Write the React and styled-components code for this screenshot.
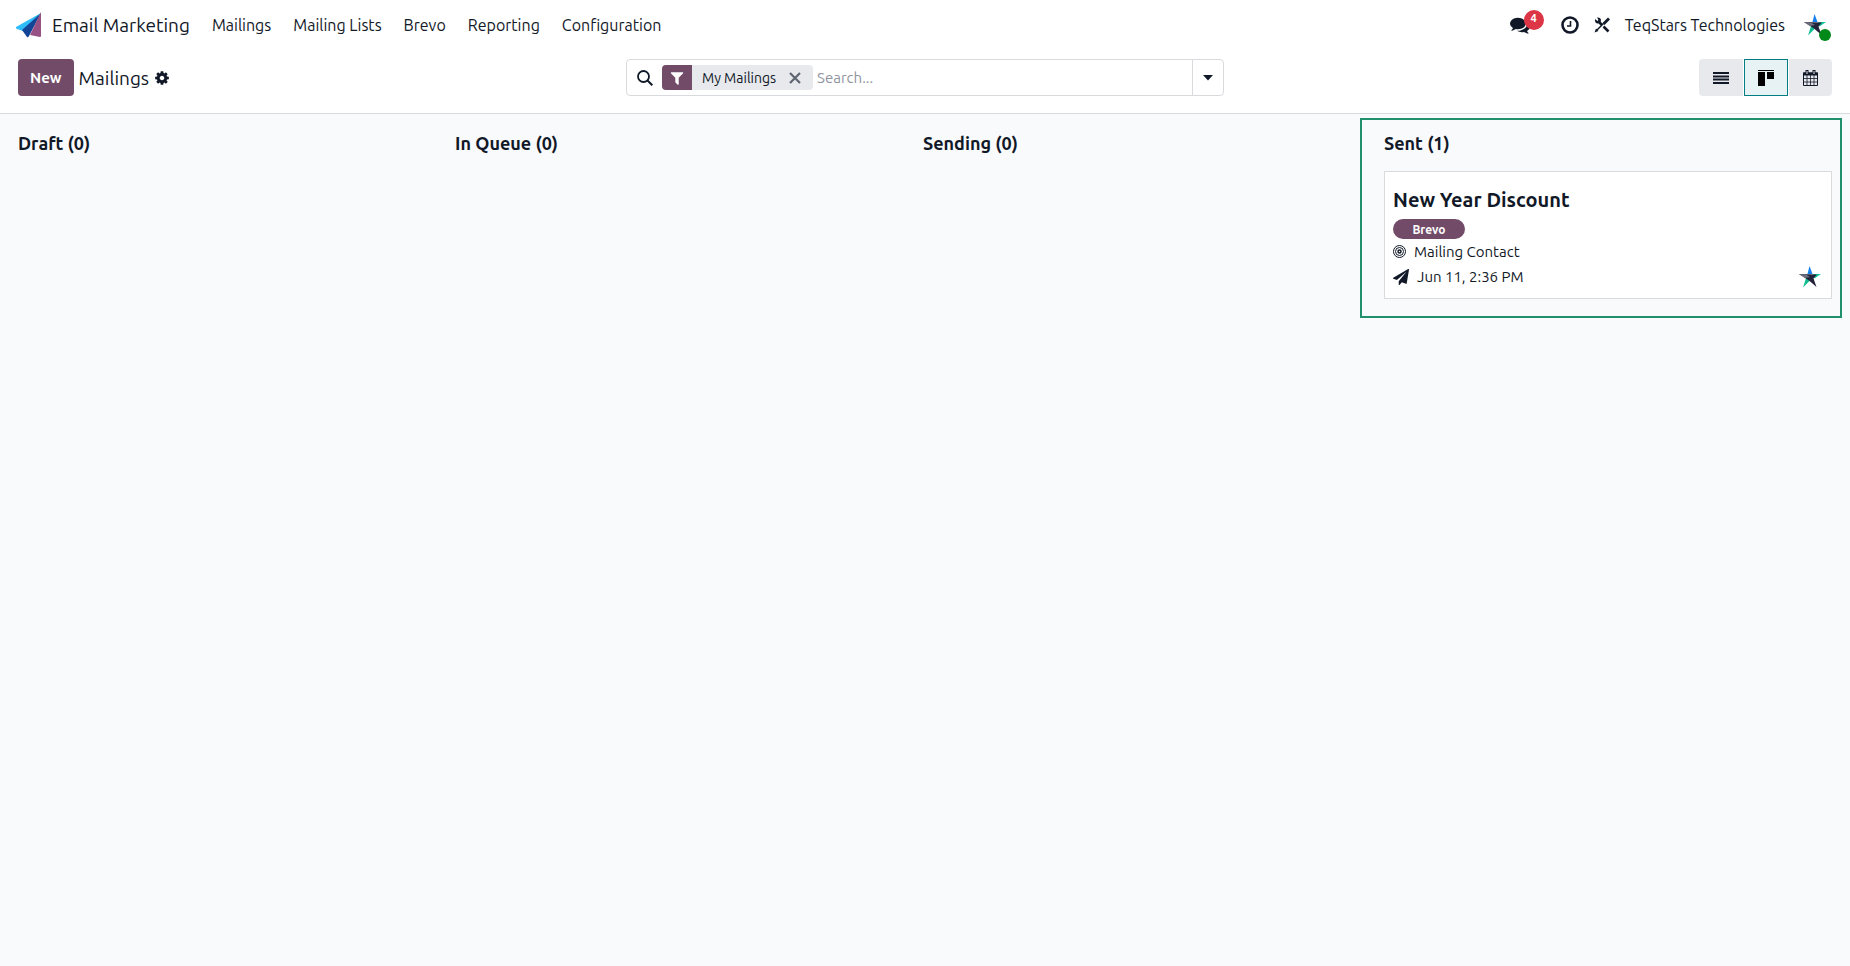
import styled, { createGlobalStyle, css } from 'styled-components';

/// /////////////////////////////////////////////
// styled
/// /////////////////////////////////////////////

const color = {
  text: '#111827',
  muted: '#8f949e',
  line: '#d8dadd',
  brand: '#714b67',
  gray: '#e7e9ed',
  teal: '#017e84',
  green: '#20916c',
};

const GlobalStyle = createGlobalStyle`
  * {
    box-sizing: border-box;
  }
  body {
    margin: 0;
    background: #f9fafc;
    color: ${color.text};
    font-family: Ubuntu, 'Noto Sans', sans-serif;
    font-size: 15px;
    line-height: 24px;
  }
  button,
  input {
    margin: 0;
    padding: 0;
    border: 0;
    background: none;
    color: inherit;
    font: inherit;
  }
  button {
    cursor: pointer;
  }
  svg {
    display: block;
    flex: none;
  }
`;

const Top = styled.header`
  background: #fff;
  border-bottom: 1px solid ${color.line};
`;

const Navbar = styled.nav`
  display: flex;
  align-items: center;
  height: 50px;
  padding: 0 24px 0 16px;
  font-size: 16px;
`;

const AppLink = styled.a`
  display: flex;
  align-items: center;
  gap: 10px;
  margin-right: 22px;
  color: inherit;
  font-size: 19px;
  text-decoration: none;
`;

const Menu = styled.div`
  display: flex;
  gap: 22px;
`;

const MenuLink = styled.a`
  color: inherit;
  text-decoration: none;
`;

const Systray = styled.div`
  display: flex;
  align-items: center;
  gap: 15px;
  margin-left: auto;
`;

const IconButton = styled.button`
  display: flex;
  position: relative;
  margin-right: ${props => (props.$counted ? '16px' : 0)};
`;

const Company = styled.span`
  margin-right: 4px;
`;

const Counter = styled.span`
  position: absolute;
  left: 14px;
  top: -5px;
  width: 20px;
  height: 20px;
  border-radius: 10px;
  background: #dc3545;
  color: #fff;
  font-size: 11px;
  font-weight: 600;
  line-height: 17px;
  text-align: center;
`;

const Online = styled.span`
  position: absolute;
  right: -5px;
  bottom: -5px;
  width: 12px;
  height: 12px;
  border-radius: 6px;
  background: #008818;
`;

const ControlPanel = styled.div`
  display: grid;
  grid-template-columns: 1fr minmax(300px, 598px) 1fr;
  align-items: center;
  padding: 9px 18px 17px;
`;

const Breadcrumb = styled.div`
  display: flex;
  align-items: center;
  gap: 5px;
`;

const NewButton = styled.button`
  height: 37px;
  padding: 0 12px;
  border-radius: 4px;
  background: ${color.brand};
  color: #fff;
  font-weight: 600;
`;

const PageTitle = styled.h1`
  margin: 0;
  font-size: 19px;
  font-weight: 400;
`;

const SearchBar = styled.div`
  display: flex;
  align-items: center;
  height: 37px;
  border: 1px solid ${color.line};
  border-radius: 4px;
`;

const SearchIcon = styled.div`
  padding: 0 9px 0 10px;
`;

const Facet = styled.div`
  display: flex;
  align-items: center;
  height: 25px;
  padding-right: 12px;
  border-radius: 4px;
  overflow: hidden;
  background: ${color.gray};
  font-size: 14px;
`;

const FacetIcon = styled.div`
  display: flex;
  align-items: center;
  justify-content: center;
  width: 30px;
  height: 25px;
  margin-right: 10px;
  background: ${color.brand};
  color: #fff;
`;

const FacetRemove = styled.button`
  margin-left: 13px;
  color: #5f6672;
`;

const SearchInput = styled.input`
  flex: 1;
  min-width: 0;
  margin-left: 4px;
  outline: 0;
  &::placeholder {
    color: ${color.muted};
    opacity: 1;
  }
`;

const SearchToggle = styled.button`
  display: flex;
  align-items: center;
  justify-content: center;
  width: 31px;
  height: 35px;
  border-left: 1px solid ${color.line};
`;

const Views = styled.div`
  display: flex;
  gap: 1px;
  justify-self: end;
`;

const ViewButton = styled.button`
  display: flex;
  align-items: center;
  justify-content: center;
  width: 44px;
  height: 37px;
  background: ${color.gray};
  &:first-child {
    border-radius: 4px 0 0 4px;
  }
  &:last-child {
    width: 43px;
    border-radius: 0 4px 4px 0;
  }
  ${props =>
    props.$active &&
    css`
      border: 1px solid ${color.teal};
      background: #e6f2f3;
      color: #000;
    `}
`;

const Board = styled.main`
  display: grid;
  grid-template-columns: 437fr 468fr 437fr 508fr;
  align-items: start;
`;

const Column = styled.section`
  padding: ${props => (props.$framed ? '4px 8px 0 18px' : '6px 18px 0')};
`;

const Frame = styled.div`
  padding: 0 8px 17px 22px;
  border: 2px solid ${color.green};
`;

const ColumnTitle = styled.h2`
  margin: 0;
  padding: 11px 0 16px;
  font-size: 18px;
  font-weight: 600;
`;

const Card = styled.article`
  padding: 16px 10px 9px 8px;
  border: 1px solid ${color.line};
  background: #fff;
`;

const CardTitle = styled.h3`
  margin: 0 0 7px;
  font-size: 20px;
  font-weight: 600;
`;

const Tag = styled.span`
  display: block;
  width: 72px;
  height: 20px;
  border-radius: 10px;
  background: ${color.brand};
  color: #fff;
  font-size: 12px;
  font-weight: 600;
  line-height: 21px;
  text-align: center;
`;

const CardRow = styled.div`
  display: flex;
  align-items: center;
  gap: 8px;
  height: 25px;
`;

const Owner = styled.div`
  margin-left: auto;
`;

/// /////////////////////////////////////////////
// icons
/// /////////////////////////////////////////////

const Glyph = ({ size, d }) => (
  <svg width={size} height={size} viewBox="0 0 1792 1792" fill="currentColor" aria-hidden="true">
    <path d={d} />
  </svg>
);

const glyphs = {
  cog:
    'M1152 896q0-106-75-181t-181-75-181 75-75 181 75 181 181 75 181-75 75-181zm512-109v222q0 12-8 23t-20 13l-185 28q-19 54-39 91 35 50 107 138 10 12 10 25t-9 23q-27 37-99 108t-94 71q-12 0-26-9l-138-108q-44 23-91 38-16 136-29 186-7 28-36 28h-222q-14 0-24.5-8.5t-11.500-21.500l-28-184q-49-16-90-37l-141 107q-10 9-25 9-14 0-25-11-126-114-165-168-7-10-7-23 0-12 8-23 15-21 51-66.500t54-70.500q-27-50-41-99l-183-27q-13-2-21-12.500t-8-23.500v-222q0-12 8-23t19-13l186-28q14-46 39-92-40-57-107-138-10-12-10-24 0-10 9-23 26-36 98.500-107.500t94.500-71.500q13 0 26 10l138 107q44-23 91-38 16-136 29-186 7-28 36-28h222q14 0 24.500 8.500t11.500 21.500l28 184q49 16 90 37l142-107q9-9 24-9 13 0 25 10 129 119 165 170 7 8 7 22 0 12-8 23-15 21-51 66.500t-54 70.500q26 50 41 98l183 28q13 2 21 12.500t8 23.500z',
  filter:
    'M1595 295q17 41-14 70l-493 493v742q0 42-39 59-13 5-25 5-27 0-45-19l-256-256q-19-19-19-45v-486l-493-493q-31-29-14-70 17-39 59-39h1280q42 0 59 39z',
  comments:
    'M1408 768q0 139-94 257t-256.500 186.500-353.500 68.500q-86 0-176-16-124 88-278 128-36 9-86 16h-3q-11 0-20.500-8t-11.500-21q-1-3-1-6.500t.5-6.500 2-6l2.500-5 3.500-5.500 4-5 4.500-5 4-4.500q5-6 23-25t26-29.500 22.500-29 25-38.500 20.500-44q-124-72-195-177t-71-224q0-139 94-257t256.500-186.500 353.500-68.500 353.500 68.500 256.500 186.500 94 257zm384 256q0 120-71 224.500t-195 176.500q10 24 20.500 44t25 38.500 22.500 29 26 29.500 23 25q1 1 4 4.500t4.500 5 4 5 3.500 5.500l2.500 5 2 6 .5 6.500-1 6.500q-3 14-13 22t-22 7q-50-7-86-16-154-40-278-128-90 16-176 16-271 0-472-132 58 4 88 4 161 0 309-45t264-129q125-92 192-212t67-254q0-77-23-152 129 71 204 178t75 230z',
  plane:
    'M1764 11q33 24 27 64l-256 1536q-5 29-32 45-14 8-31 8-11 0-24-5l-453-185-242 295q-18 23-49 23-13 0-22-4-19-7-30.500-23.500t-11.500-36.500v-349l864-1059-1069 925-395-162q-37-14-40-55-2-40 32-59l1664-960q15-9 32-9 20 0 36 11z',
};

const Logo = () => (
  <svg width="26" height="26" viewBox="0 0 26 26" aria-hidden="true">
    <path d="M25 1 0 15q-1 1 1 2l6 2z" fill="#2ebcfa" />
    <path d="M25 1 6 18l5 7q1 1 2-1z" fill="#144496" />
    <path d="M25 0v24q0 1-1 1l-10-2z" fill="#985184" />
  </svg>
);

const Star = () => (
  <svg width="22" height="22" viewBox="0 0 22 22" aria-hidden="true">
    <path d="M10.500 0l3 8h-5z" fill="#1680ee" />
    <path d="M14 8h8l-6.500 4.500z" fill="#18c49b" />
    <path d="M7 12l5 1.500L4 21.500z" fill="#12bd91" />
    <path d="M0 8l18 .500-3.500 4L17.500 21 10 14.500z" fill="#22223a" />
    <path d="M0 8l7 .500 4 2.500-5 1z" fill="#6d6e80" />
  </svg>
);

const Clock = () => (
  <svg width="18" height="18" viewBox="0 0 18 18" fill="none" stroke="currentColor" aria-hidden="true">
    <circle cx="9" cy="9" r="7.500" strokeWidth="2.600" />
    <path d="M9.500 5v5H6" strokeWidth="1.600" />
  </svg>
);

const Tools = () => (
  <svg width="16" height="16" viewBox="0 0 16 16" fill="none" stroke="currentColor" aria-hidden="true">
    <path d="M4 4l4 4M9.500 9.500l5 5" strokeWidth="2.600" />
    <path d="M1 2l2.500 2L4.500 3 3 .500q3-.5 4 2L6.500 6 3 6.500Q.5 5.500 1 2z" fill="currentColor" stroke="none" />
    <path d="M15 1.500L9.500 7" strokeWidth="2.800" />
    <path d="M9.500 6.500L2.500 13.500" strokeWidth="1.400" />
    <path d="M.500 15.500l1.500-4 2.500 2.500z" fill="currentColor" stroke="none" />
  </svg>
);

const Search = () => (
  <svg width="16" height="16" viewBox="0 0 16 16" fill="none" stroke="currentColor" aria-hidden="true">
    <circle cx="6.500" cy="6.500" r="5.500" strokeWidth="1.800" />
    <path d="M10.500 10.500l4.800 4.800" strokeWidth="2" />
  </svg>
);

const Cross = () => (
  <svg width="12" height="12" viewBox="0 0 12 12" stroke="currentColor" aria-hidden="true">
    <path d="M1 1l10 10M11 1L1 11" strokeWidth="2.200" />
  </svg>
);

const Caret = () => (
  <svg width="10" height="6" viewBox="0 0 10 6" fill="currentColor" aria-hidden="true">
    <path d="M0 0h10L5 5.500z" />
  </svg>
);

const ListIcon = () => (
  <svg width="16" height="12" viewBox="0 0 16 12" fill="currentColor" aria-hidden="true">
    <path d="M0 0h16v2H0zM0 10h16v2H0z" />
    <path d="M0 3h16v6H0z" opacity=".5" />
    <path d="M0 4h16v1H0zM0 7h16v1H0z" />
  </svg>
);

const KanbanIcon = () => (
  <svg width="16" height="16" viewBox="0 0 16 16" fill="currentColor" aria-hidden="true">
    <path d="M0 0h16v1H0zM0 2h7v14H0zM9 2h7v7H9z" />
  </svg>
);

const CalendarIcon = () => (
  <svg width="15" height="16" viewBox="0 0 15 16" fill="none" stroke="currentColor" aria-hidden="true">
    <path d="M.500 3h14v12.500H.500z" />
    <path d="M0 4h15" strokeWidth="3" />
    <path d="M4 0v4M11 0v4" strokeWidth="3" />
    <path d="M4 1v3M11 1v3" stroke="#e7e9ed" />
    <path d="M4 5v10M7.500 5v10M11 5v10M1 8.500h13M1 12h13" strokeWidth=".8" />
  </svg>
);

const Target = () => (
  <svg width="13" height="13" viewBox="0 0 13 13" fill="none" stroke="currentColor" aria-hidden="true">
    <circle cx="6.500" cy="6.500" r="6" />
    <circle cx="6.500" cy="6.500" r="4" />
    <circle cx="6.500" cy="6.500" r="1.500" strokeWidth="1.500" />
  </svg>
);

/// /////////////////////////////////////////////
// component
/// /////////////////////////////////////////////

const menus = ['Mailings', 'Mailing Lists', 'Brevo', 'Reporting', 'Configuration'];

const views = [
  { name: 'List', icon: <ListIcon /> },
  { name: 'Kanban', icon: <KanbanIcon />, active: true },
  { name: 'Calendar', icon: <CalendarIcon /> },
];

const emptyColumns = ['Draft (0)', 'In Queue (0)', 'Sending (0)'];

const Nav = () => (
  <Navbar>
    <AppLink href="#home">
      <Logo />
      Email Marketing
    </AppLink>
    <Menu>
      {menus.map(name => (
        <MenuLink key={name} href="#menu">
          {name}
        </MenuLink>
      ))}
    </Menu>
    <Systray>
      <IconButton aria-label="Messages" $counted>
        <Glyph size={20} d={glyphs.comments} />
        <Counter>4</Counter>
      </IconButton>
      <IconButton aria-label="Activities">
        <Clock />
      </IconButton>
      <IconButton aria-label="Developer tools">
        <Tools />
      </IconButton>
      <Company>TeqStars Technologies</Company>
      <IconButton aria-label="User">
        <Star />
        <Online />
      </IconButton>
    </Systray>
  </Navbar>
);

const Controls = () => (
  <ControlPanel>
    <Breadcrumb>
      <NewButton>New</NewButton>
      <PageTitle>Mailings</PageTitle>
      <IconButton aria-label="Actions">
        <Glyph size={16} d={glyphs.cog} />
      </IconButton>
    </Breadcrumb>
    <SearchBar>
      <SearchIcon>
        <Search />
      </SearchIcon>
      <Facet>
        <FacetIcon>
          <Glyph size={16} d={glyphs.filter} />
        </FacetIcon>
        My Mailings
        <FacetRemove aria-label="Remove">
          <Cross />
        </FacetRemove>
      </Facet>
      <SearchInput type="text" aria-label="Search" placeholder="Search..." />
      <SearchToggle aria-label="Toggle search panel">
        <Caret />
      </SearchToggle>
    </SearchBar>
    <Views>
      {views.map(view => (
        <ViewButton key={view.name} aria-label={view.name} $active={view.active}>
          {view.icon}
        </ViewButton>
      ))}
    </Views>
  </ControlPanel>
);

const App = () => (
  <>
    <GlobalStyle />
    <Top>
      <Nav />
      <Controls />
    </Top>
    <Board>
      {emptyColumns.map(title => (
        <Column key={title}>
          <ColumnTitle>{title}</ColumnTitle>
        </Column>
      ))}
      <Column $framed>
        <Frame>
          <ColumnTitle>Sent (1)</ColumnTitle>
          <Card>
            <CardTitle>New Year Discount</CardTitle>
            <Tag>Brevo</Tag>
            <CardRow>
              <Target />
              Mailing Contact
            </CardRow>
            <CardRow>
              <Glyph size={16} d={glyphs.plane} />
              Jun 11, 2:36 PM
              <Owner>
                <Star />
              </Owner>
            </CardRow>
          </Card>
        </Frame>
      </Column>
    </Board>
  </>
);

export default App;
